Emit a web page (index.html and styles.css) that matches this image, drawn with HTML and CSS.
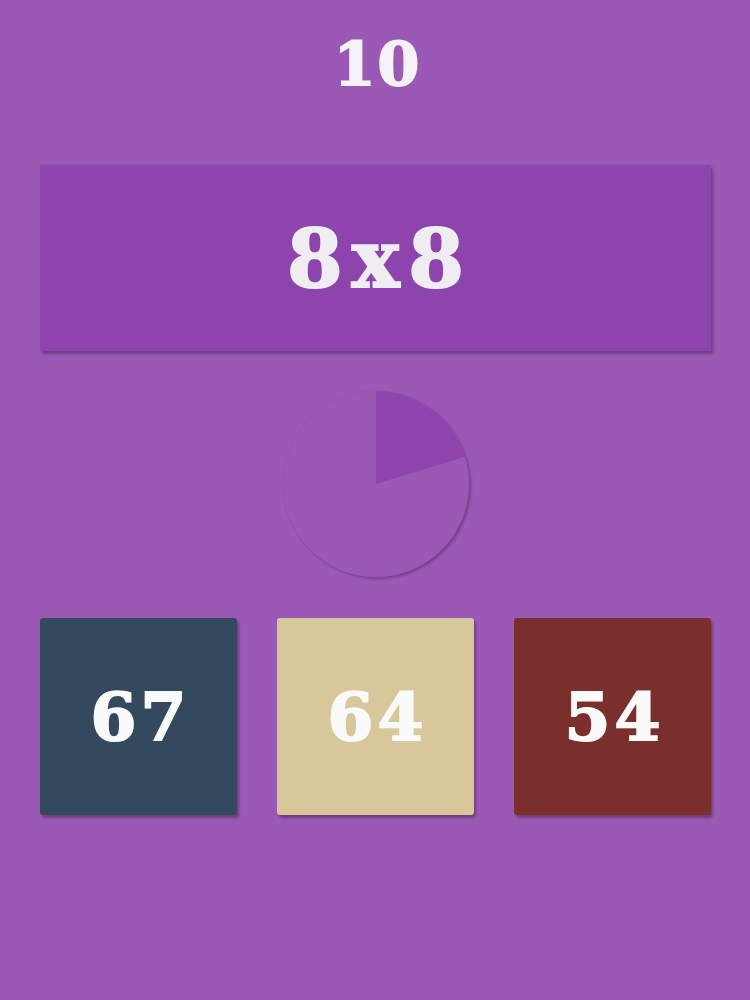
FILE: index.html
```html
<!DOCTYPE html>
<html>
<head>
<meta charset="utf-8">
<link rel="stylesheet" href="styles.css">
</head>
<body>
<main class="game">
  <div class="score">10</div>
  <div class="question">8x8</div>
  <div class="timer">
    <svg width="186" height="186" viewBox="0 0 186 186">
      <circle cx="93" cy="93" r="93" fill="#9b59b6"/>
      <path d="M93 93 L93 0 A93 93 0 0 1 181.9 65.8 Z" fill="#8e44ad"/>
    </svg>
  </div>
  <div class="answers">
    <div class="tile tile-blue">67</div>
    <div class="tile tile-sand">64</div>
    <div class="tile tile-red">54</div>
  </div>
</main>
</body>
</html>
```
FILE: styles.css
```css
html, body {
  margin: 0;
  padding: 0;
  background: #9b59b6;
  height: 100%;
}
.game {
  display: flex;
  flex-direction: column;
  align-items: stretch;
  padding: 0 39px 0 40px;
  font-family: "DejaVu Serif", "Liberation Serif", serif;
  font-weight: bold;
  color: #f4f2f6;
  -webkit-text-stroke: 2px currentColor;
}
.score {
  height: 128px;
  display: flex;
  align-items: center;
  justify-content: center;
  font-size: 60px;
  letter-spacing: 2px;
  padding-left: 4px;
}
.question {
  margin-top: 37px;
  height: 186px;
  background: #8e44ad;
  display: flex;
  align-items: center;
  justify-content: center;
  font-size: 80px;
  letter-spacing: 9px;
  box-shadow: 2px 3px 3px rgba(0,0,0,0.3);
  color: #efedf2;
  padding-top: 2px;
  padding-left: 9px;
  box-sizing: border-box;
}
.timer {
  margin: 40px auto 0;
  width: 186px;
  height: 186px;
  border-radius: 50%;
  box-shadow: 0 0 1px rgba(0,0,0,0.2), 2px 2px 3px rgba(0,0,0,0.25);
}
.timer svg {
  display: block;
}
.answers {
  margin-top: 41px;
  display: grid;
  grid-template-columns: repeat(3, 1fr);
  gap: 40px;
}
.tile {
  height: 197px;
  border-radius: 3px;
  display: flex;
  align-items: center;
  justify-content: center;
  font-size: 66px;
  letter-spacing: 4px;
  padding-left: 4px;
  color: #fbfafa;
  box-shadow: 2px 3px 3px rgba(0,0,0,0.3);
}
.tile-blue { background: #34495e; }
.tile-sand { background: #d8c79a; }
.tile-red { background: #7b2f2c; }
```
